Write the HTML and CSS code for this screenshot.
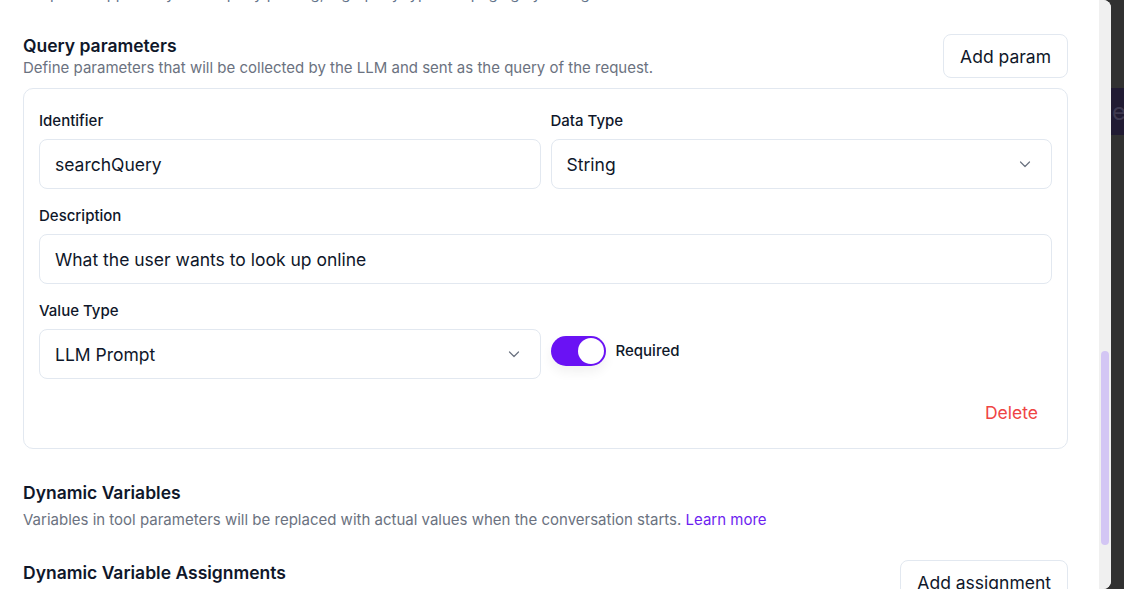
FILE: index.html
```html
<!DOCTYPE html>
<html lang="en">
<head>
<meta charset="utf-8">
<title>Query parameters</title>
<link rel="stylesheet" href="styles.css">
</head>
<body>
<div class="page">
  <div class="modal">
    <div class="content">
      <p class="clipped">Endpoint supports dynamic query parsing, e.g. query type and paging by the agent</p>

      <div class="section-head">
        <div class="head-text">
          <h2 class="title">Query parameters</h2>
          <p class="desc">Define parameters that will be collected by the LLM and sent as the query of the request.</p>
        </div>
        <button class="btn">Add param</button>
      </div>

      <div class="card">
        <div class="row two">
          <div class="field">
            <label class="label">Identifier</label>
            <div class="input">searchQuery</div>
          </div>
          <div class="field">
            <label class="label">Data Type</label>
            <div class="input select">String
              <svg class="chev" width="14" height="14" viewBox="0 0 14 14"><path d="M2.5 5 L7 9.5 L11.5 5" fill="none" stroke="#6b7280" stroke-width="1.2" stroke-linecap="round" stroke-linejoin="round"/></svg>
            </div>
          </div>
        </div>
        <div class="field">
          <label class="label">Description</label>
          <div class="input">What the user wants to look up online</div>
        </div>
        <div class="row two">
          <div class="field">
            <label class="label">Value Type</label>
            <div class="input select">LLM Prompt
              <svg class="chev" width="14" height="14" viewBox="0 0 14 14"><path d="M2.5 5 L7 9.5 L11.5 5" fill="none" stroke="#6b7280" stroke-width="1.2" stroke-linecap="round" stroke-linejoin="round"/></svg>
            </div>
          </div>
          <div class="field toggle-field">
            <div class="toggle-wrap">
              <span class="toggle"><span class="knob"></span></span>
              <span class="toggle-label">Required</span>
            </div>
          </div>
        </div>
        <div class="actions">
          <button class="delete">Delete</button>
        </div>
      </div>

      <div class="block">
        <h2 class="title">Dynamic Variables</h2>
        <p class="desc gap">Variables in tool parameters will be replaced with actual values when the conversation starts. <a class="link" href="#">Learn more</a></p>
      </div>

      <div class="section-head assign">
        <div class="head-text">
          <h2 class="title">Dynamic Variable Assignments</h2>
          <p class="desc gap">Assign dynamic variables from the tool response to be used later.</p>
        </div>
        <button class="btn">Add assignment</button>
      </div>
    </div>
    <div class="track"><div class="thumb"></div></div>
  </div>
  <div class="side">
    <div class="side-top"></div>
    <div class="side-band">e</div>
  </div>
</div>
</body>
</html>
```

FILE: styles.css
```css
* { box-sizing: border-box; }
html, body { margin: 0; padding: 0; }
body {
  background: #313131;
  font-family: Inter, "Noto Sans", sans-serif;
  color: #0f172a;
  overflow: hidden;
  width: 1124px;
  height: 589px;
}
.page {
  display: flex;
  height: 589px;
}
.modal {
  flex: 0 0 1111px;
  width: 1111px;
  height: 589px;
  background: #fff;
  border-radius: 0 8px 8px 0;
  display: flex;
  overflow: hidden;
}
.content {
  flex: 0 0 1099px;
  width: 1099px;
  min-width: 0;
  padding: 0 31px 0 23px;
  overflow: hidden;
}
.clipped {
  margin: -16px 0 0;
  line-height: 20px;
  font-size: 15px;
  color: #64748b;
  white-space: nowrap;
}
.section-head {
  display: flex;
  justify-content: space-between;
  align-items: flex-start;
  margin-top: 30px;
}
.section-head.assign { margin-top: 30px; }
.assign .title { margin-top: 1px; }
.title {
  margin: 0;
  font-size: 17.5px;
  line-height: 24px;
  font-weight: 600;
  color: #0f172a;
}
.desc {
  margin: 0;
  font-size: 15px;
  line-height: 20px;
  color: #6b7280;
}
.desc.gap { margin-top: 5px; }
.btn {
  font-family: inherit;
  font-size: 17.5px;
  color: #0f172a;
  background: #fff;
  border: 1px solid #e2e8f0;
  border-radius: 8px;
  height: 44px;
  padding: 0 16px;
  cursor: pointer;
}
.card {
  margin-top: 10px;
  border: 1px solid #e2e8f0;
  border-radius: 10px;
  padding: 22px 15px 16px;
  display: flex;
  flex-direction: column;
  gap: 17px;
}
.row.two {
  display: grid;
  grid-template-columns: 1fr 1fr;
  gap: 10px;
}
.field {
  display: flex;
  flex-direction: column;
  gap: 8px;
}
.label {
  font-size: 15px;
  line-height: 20px;
  font-weight: 500;
  color: #0f172a;
}
.input {
  height: 50px;
  border: 1px solid #e2e8f0;
  border-radius: 8px;
  padding: 0 15px;
  display: flex;
  align-items: center;
  font-size: 17.5px;
  color: #0f172a;
}
.select { justify-content: space-between; }
.chev { margin-right: 4px; }
.toggle-field { justify-content: flex-end; }
.toggle-wrap {
  height: 50px;
  display: flex;
  align-items: flex-start;
  gap: 10px;
  padding-top: 7px;
}
.toggle {
  width: 55px;
  height: 30px;
  border-radius: 15px;
  background: #6a12f4;
  display: flex;
  align-items: center;
  justify-content: flex-end;
  padding: 0 2px;
  box-shadow: 0 6px 12px rgba(0,0,0,0.06);
}
.knob {
  width: 26px;
  height: 26px;
  border-radius: 50%;
  background: #fff;
}
.toggle-label {
  font-size: 15px;
  line-height: 30px;
  font-weight: 500;
  color: #0f172a;
}
.actions {
  display: flex;
  justify-content: flex-end;
  margin-top: -4px;
}
.delete {
  font-family: inherit;
  font-size: 17.5px;
  color: #ef4444;
  background: transparent;
  border: 0;
  height: 40px;
  padding: 0 14px;
  cursor: pointer;
}
.block { margin-top: 32px; }
.link { color: #6d1ff0; text-decoration: none; }
.track {
  flex: 0 0 12px;
  width: 12px;
  background: #f0f0f0;
  padding: 351px 2px 0;
}
.thumb {
  height: 194px;
  border-radius: 4px;
  background: #d3c6f4;
}
.side {
  flex: 1;
  display: flex;
  flex-direction: column;
}
.side-top { height: 88px; }
.side-band {
  height: 47px;
  background: #211b33;
  color: #3e3950;
  font-size: 24px;
  line-height: 47px;
  padding-left: 1px;
  overflow: hidden;
  font-family: Inter, sans-serif;
}
```
